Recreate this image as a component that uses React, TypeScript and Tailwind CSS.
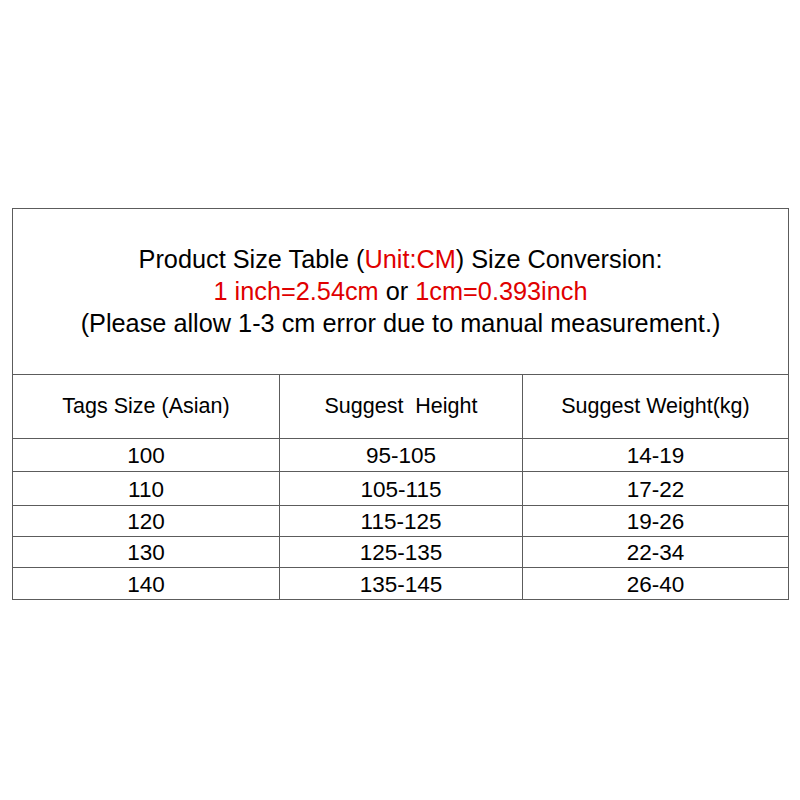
const rows = [
  { tag: '100', height: '95-105', weight: '14-19', h: 'h-[33px]' },
  { tag: '110', height: '105-115', weight: '17-22', h: 'h-[34px]' },
  { tag: '120', height: '115-125', weight: '19-26', h: 'h-[31px]' },
  { tag: '130', height: '125-135', weight: '22-34', h: 'h-[31px]' },
  { tag: '140', height: '135-145', weight: '26-40', h: 'h-[32px]' },
];

export default function App() {
  return (
    <div className="w-[800px] h-[800px] bg-white pt-[208px] pl-[12px] font-['Liberation_Sans',Arial,sans-serif] text-black">
      <table className="table-fixed border-collapse w-[776px]">
        <colgroup>
          <col className="w-[267px]" />
          <col className="w-[243px]" />
          <col className="w-[266px]" />
        </colgroup>
        <tbody>
          <tr className="h-[166px]">
            <td colSpan={3} className="border border-[#5c5c5c] text-center text-[25.3px] leading-[32px] pb-[2px]">
              <div>
                Product Size Table (<span className="text-[#e00000]">Unit:CM</span>) Size Conversion:
              </div>
              <div>
                <span className="text-[#e00000]">1 inch=2.54cm</span> or{' '}
                <span className="text-[#e00000]">1cm=0.393inch</span>
              </div>
              <div>(Please allow 1-3 cm error due to manual measurement.)</div>
            </td>
          </tr>
          <tr className="h-[64px] text-[21.5px]">
            <td className="border border-[#5c5c5c] text-center">Tags Size (Asian)</td>
            <td className="border border-[#5c5c5c] text-center">Suggest&nbsp; Height</td>
            <td className="border border-[#5c5c5c] text-center">Suggest Weight(kg)</td>
          </tr>
          {rows.map((r) => (
            <tr key={r.tag} className={`${r.h} text-[22.5px] leading-none`}>
              <td className="border border-[#5c5c5c] text-center pt-[3px]">{r.tag}</td>
              <td className="border border-[#5c5c5c] text-center pt-[3px]">{r.height}</td>
              <td className="border border-[#5c5c5c] text-center pt-[3px]">{r.weight}</td>
            </tr>
          ))}
        </tbody>
      </table>
    </div>
  );
}
